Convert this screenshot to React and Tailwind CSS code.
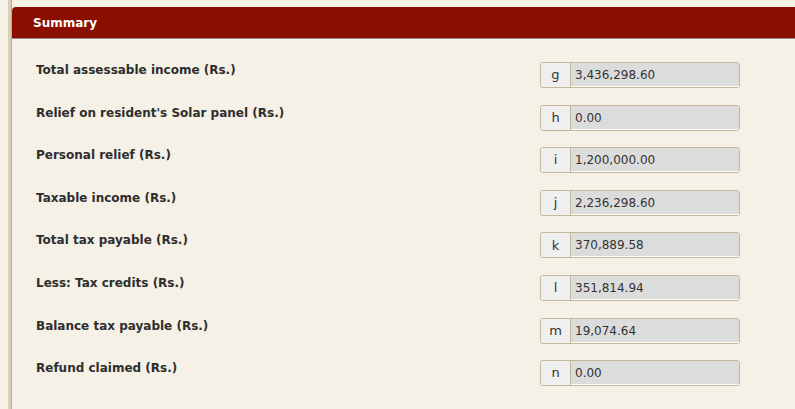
import React from 'react';

const rows = [
  { label: 'Total assessable income (Rs.)', key: 'g', value: '3,436,298.60' },
  { label: "Relief on resident's Solar panel (Rs.)", key: 'h', value: '0.00' },
  { label: 'Personal relief (Rs.)', key: 'i', value: '1,200,000.00' },
  { label: 'Taxable income (Rs.)', key: 'j', value: '2,236,298.60' },
  { label: 'Total tax payable (Rs.)', key: 'k', value: '370,889.58' },
  { label: 'Less: Tax credits (Rs.)', key: 'l', value: '351,814.94' },
  { label: 'Balance tax payable (Rs.)', key: 'm', value: '19,074.64' },
  { label: 'Refund claimed (Rs.)', key: 'n', value: '0.00' },
];

const SummaryRow = ({ label, code, value }) => (
  <div className="flex items-start h-[42.6px]">
    <div className="w-[528px] pl-[24px] pt-[1px] text-[12px] leading-[14px] font-bold text-[#2e2e2e]">
      {label}
    </div>
    <div className="flex w-[200px] h-[26px] border border-[#c3b899] rounded-[3px] overflow-hidden">
      <div className="w-[30px] flex items-center justify-center bg-[#efefef] border-r border-[#c3b899] text-[13px] text-[#333333]">
        {code}
      </div>
      <div className="flex-1 flex items-center pl-[4px] bg-[#dcdcdc] shadow-[inset_0_-1px_0_#ffffff] text-[12px] text-[#333333]">
        {value}
      </div>
    </div>
  </div>
);

export default function App() {
  return (
    <div
      className="min-h-screen bg-[#f5f1e6] pl-[8px] flex"
      style={{ fontFamily: '"DejaVu Sans", Verdana, sans-serif' }}
    >
      <div className="flex-1 border-l-[3px] border-[#d8cfb4]">
        <div className="min-h-screen border-l border-[#b7ac8e] pt-[7px]">
          {/* Section header */}
          <div className="h-[32px] bg-[#8a0f00] rounded-tl-[4px] border-b border-[#8d8d8d] flex items-center pl-[21px]">
            <span className="text-white text-[12px] font-bold">Summary</span>
          </div>

          {/* Summary fields */}
          <div className="pt-[23px]">
            {rows.map((r) => (
              <SummaryRow key={r.key} label={r.label} code={r.key} value={r.value} />
            ))}
          </div>
        </div>
      </div>
    </div>
  );
}
